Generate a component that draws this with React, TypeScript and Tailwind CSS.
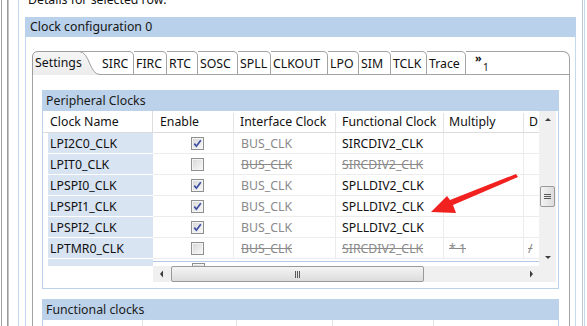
import React from "react";

type Row = {
  name: string;
  on: boolean;
  iface: string;
  func: string;
  mult?: string;
  d?: string;
};

const ROWS: Row[] = [
  { name: "LPI2C0_CLK", on: true, iface: "BUS_CLK", func: "SIRCDIV2_CLK" },
  { name: "LPIT0_CLK", on: false, iface: "BUS_CLK", func: "SIRCDIV2_CLK" },
  { name: "LPSPI0_CLK", on: true, iface: "BUS_CLK", func: "SPLLDIV2_CLK" },
  { name: "LPSPI1_CLK", on: true, iface: "BUS_CLK", func: "SPLLDIV2_CLK" },
  { name: "LPSPI2_CLK", on: true, iface: "BUS_CLK", func: "SPLLDIV2_CLK" },
  {
    name: "LPTMR0_CLK",
    on: false,
    iface: "BUS_CLK",
    func: "SIRCDIV2_CLK",
    mult: "* 1",
    d: "/",
  },
];

const TABS: { label: string; w: string }[] = [
  { label: "SIRC", w: "w-[34px]" },
  { label: "FIRC", w: "w-[33px]" },
  { label: "RTC", w: "w-[31px]" },
  { label: "SOSC", w: "w-[40px]" },
  { label: "SPLL", w: "w-[33px]" },
  { label: "CLKOUT", w: "w-[57px]" },
  { label: "LPO", w: "w-[31px]" },
  { label: "SIM", w: "w-[32px]" },
  { label: "TCLK", w: "w-[36px]" },
  { label: "Trace", w: "w-[39px]" },
];

function Check({ on }: { on: boolean }) {
  return (
    <span className="flex h-[13px] w-[13px] items-center justify-center border border-[#8e8f8f] bg-[linear-gradient(135deg,#d6d6d6,#fafafa)] shadow-[inset_0_0_0_1px_#f4f4f4]">
      {on && (
        <svg width="9" height="9" viewBox="0 0 9 9">
          <path
            d="M1.3 4.6 L3.4 7.2 L7.8 1.2"
            fill="none"
            stroke="#3e4fa3"
            strokeWidth="1.7"
          />
        </svg>
      )}
    </span>
  );
}

function Arrow({ dir }: { dir: "up" | "down" | "left" | "right" }) {
  const d = {
    up: "M1 5 L4 2 L7 5 Z",
    down: "M1 2 L4 5 L7 2 Z",
    left: "M5 0.5 L2 4 L5 7.5 Z",
    right: "M3 0.5 L6 4 L3 7.5 Z",
  }[dir];
  return (
    <svg width="8" height="8" viewBox="0 0 8 8">
      <path d={d} fill="#3c3c3c" />
    </svg>
  );
}

function Grip({ vertical }: { vertical?: boolean }) {
  return (
    <span className={vertical ? "flex flex-col gap-[1px]" : "flex gap-[1px]"}>
      {[0, 1, 2].map((i) => (
        <span
          key={i}
          className={
            vertical
              ? "h-[1px] w-[7px] bg-[#5a5a5a]"
              : "h-[7px] w-[1px] bg-[#5a5a5a]"
          }
        />
      ))}
    </span>
  );
}

function SettingsTab() {
  return (
    <div className="relative h-[24px] w-[68px] shrink-0">
      <svg
        className="absolute inset-0"
        width="68"
        height="24"
        viewBox="0 0 68 24"
      >
        <defs>
          <linearGradient id="tg" x1="0" y1="0" x2="0" y2="1">
            <stop offset="0" stopColor="#f6f6f6" />
            <stop offset="1" stopColor="#ececec" />
          </linearGradient>
        </defs>
        <path
          d="M0.5 24 L0.5 6 Q0.5 0.5 6 0.5 L47 0.5 C58 0.5 57 23.5 68 23.5 L68 24 Z"
          fill="url(#tg)"
        />
        <path d="M47 0.5 L68 0.5" stroke="#a3a3a3" fill="none" />
        <path
          d="M0.5 24 L0.5 6 Q0.5 0.5 6 0.5 L47 0.5 C58 0.5 57 23.5 68 23.5"
          stroke="#9c9c9c"
          fill="none"
        />
      </svg>
      <span className="relative flex h-full items-center pl-[3px] pt-[1px]">
        Settings
      </span>
    </div>
  );
}

export default function App() {
  return (
    <div className="relative flex h-[326px] w-[587px] overflow-hidden bg-white font-['Noto_Sans',sans-serif] text-[12.3px] leading-none text-[#111]">
      {/* left frame lines */}
      <div className="w-[1px] shrink-0" />
      <div className="w-[6px] shrink-0 border-l border-[#a3a3a3]" />
      <div className="w-[1px] shrink-0 bg-[#9a9a9a]" />
      <div className="w-[1px] shrink-0 bg-[#c4c4c4]" />
      <div className="w-[9px] shrink-0" />

      <div className="flex w-[558px] shrink-0 flex-col border-l border-[#c6d8ee] pl-[6px]">
        <div className="mt-[-8px] h-[15px] pl-[3px] leading-[15px]">
          Details for selected row:
        </div>

        {/* Clock configuration panel */}
        <div className="mt-[10px] flex w-[551px] flex-col">
          <div className="flex h-[20px] items-center bg-[#b9d1ea] pl-[5px] pt-[1px] text-[#141414]">
            Clock configuration 0
          </div>
          <div className="flex flex-col border-x border-[#c6d8ee] pl-[6px] pt-[14px]">
            {/* tab folder */}
            <div className="flex w-[538px] flex-col">
              <div className="flex h-[24px]">
                <SettingsTab />
                {TABS.map((t) => (
                  <div
                    key={t.label}
                    className={`${t.w} flex h-[24px] shrink-0 items-center rounded-tr-[5px] border-y border-r border-[#a3a3a3] pl-[2px] pt-[2px]`}
                  >
                    {t.label}
                  </div>
                ))}
                <div className="flex h-[24px] flex-1 rounded-tr-[7px] border-y border-r border-[#a3a3a3] pl-[9px]">
                  <span className="relative h-full w-[14px]">
                    <span className="absolute left-0 top-[0px] text-[11px] font-bold leading-none">
                      »
                    </span>
                    <span className="absolute left-[8px] top-[10px] text-[10px] leading-none">
                      1
                    </span>
                  </span>
                </div>
              </div>

              <div className="flex flex-col border-x border-[#a3a3a3] pl-[9px] pt-[15px]">
                {/* Peripheral Clocks group */}
                <div className="flex w-[517px] flex-col border border-[#bcd2ea]">
                  <div className="flex h-[20px] items-center bg-[#bcd2ea] pl-[3px] pt-[1px] text-[#1a1a1a]">
                    Peripheral Clocks
                  </div>
                  <div className="flex">
                    {/* frozen column */}
                    <div className="flex w-[110px] shrink-0 flex-col">
                      <div className="flex h-[22px] items-center border-b border-r border-[#dcdcdc] pl-[7px] pt-[2px]">
                        Clock Name
                      </div>
                      {ROWS.map((r) => (
                        <div
                          key={r.name}
                          className="ml-[5px] flex h-[21px] items-center border-b border-white bg-[#d8e4f2] pl-[2px] pt-[3px]"
                        >
                          {r.name}
                        </div>
                      ))}
                      <div className="ml-[5px] h-[7px] bg-[#d8e4f2]" />
                      <div className="h-[16px]" />
                    </div>

                    {/* scrolling part */}
                    <div className="flex w-[386px] shrink-0 flex-col">
                      <div className="flex h-[22px] border-b border-[#dcdcdc] pt-[2px]">
                        <div className="flex w-[81px] items-center border-r border-[#e4e4e4] pl-[7px]">
                          Enable
                        </div>
                        <div className="flex w-[102px] items-center border-r border-[#e4e4e4] pl-[6px]">
                          Interface Clock
                        </div>
                        <div className="flex w-[108px] items-center border-r border-[#e4e4e4] pl-[6px]">
                          Functional Clock
                        </div>
                        <div className="flex w-[80px] items-center border-r border-[#e4e4e4] pl-[5px]">
                          Multiply
                        </div>
                        <div className="flex w-[15px] items-center overflow-hidden pl-[5px]">
                          D
                        </div>
                      </div>
                      {ROWS.map((r) => {
                        const off = !r.on;
                        const gray = "text-[#8a8a8a]";
                        return (
                          <div
                            key={r.name}
                            className="flex h-[21px] border-b border-[#ececec]"
                          >
                            <div className="flex w-[81px] items-center justify-center border-r border-[#ececec] pl-[9px]">
                              <Check on={r.on} />
                            </div>
                            <div
                              className={`flex w-[102px] items-center border-r border-[#ececec] pl-[7px] pt-[3px] ${gray} ${off ? "line-through" : ""}`}
                            >
                              {r.iface}
                            </div>
                            <div
                              className={`flex w-[108px] items-center border-r border-[#ececec] pl-[6px] pt-[3px] ${off ? `${gray} line-through` : "text-[#111]"}`}
                            >
                              {r.func}
                            </div>
                            <div
                              className={`flex w-[80px] items-center border-r border-[#ececec] pl-[5px] pt-[3px] ${gray} line-through`}
                            >
                              {r.mult ?? ""}
                            </div>
                            <div
                              className={`flex w-[15px] items-center overflow-hidden pl-[4px] pt-[3px] ${gray} line-through`}
                            >
                              {r.d ?? ""}
                            </div>
                          </div>
                        );
                      })}
                      <div className="h-[7px] overflow-hidden pt-[2px]">
                        <div className="flex h-[5px] border-t border-[#b4cbe7] pt-[1px]">
                          <div className="flex w-[81px] justify-center pl-[9px]">
                            <Check on={false} />
                          </div>
                        </div>
                      </div>
                      {/* horizontal scrollbar */}
                      <div className="flex h-[16px] items-stretch bg-[#f0f0f0]">
                        <div className="flex w-[17px] items-center justify-center">
                          <Arrow dir="left" />
                        </div>
                        <div className="ml-[1px] flex w-[253px] items-center justify-center rounded-[2px] border border-[#9a9a9a] bg-[linear-gradient(#f4f4f4,#dcdcdc)]">
                          <Grip />
                        </div>
                        <div className="flex-1" />
                        <div className="flex w-[17px] items-center justify-center">
                          <Arrow dir="right" />
                        </div>
                      </div>
                    </div>

                    {/* vertical scrollbar */}
                    <div className="flex w-[17px] shrink-0 flex-col bg-[#f0f0f0]">
                      <div className="flex h-[17px] items-center justify-center">
                        <Arrow dir="up" />
                      </div>
                      <div className="h-[58px]" />
                      <div className="mx-[1px] flex h-[21px] items-center justify-center rounded-[2px] border border-[#9a9a9a] bg-[linear-gradient(90deg,#f4f4f4,#dcdcdc)]">
                        <Grip vertical />
                      </div>
                      <div className="flex-1" />
                      <div className="flex h-[17px] items-center justify-center">
                        <Arrow dir="down" />
                      </div>
                      <div className="h-[16px]" />
                    </div>
                  </div>
                  <div className="h-[6px]" />
                </div>

                {/* Functional clocks group */}
                <div className="mt-[10px] flex w-[517px] flex-col border-x border-t border-[#bcd2ea]">
                  <div className="flex h-[20px] items-center bg-[#bcd2ea] pl-[3px] pt-[1px] text-[#1a1a1a]">
                    Functional clocks
                  </div>
                  <div className="flex h-[20px]">
                    <div className="w-[100px] border-r border-[#e4e4e4]" />
                    <div className="w-[94px] border-r border-[#e4e4e4]" />
                    <div className="w-[96px] border-r border-[#e4e4e4]" />
                    <div className="w-[101px] border-r border-[#e4e4e4]" />
                    <div className="flex-1" />
                  </div>
                </div>
              </div>
            </div>
          </div>
        </div>
      </div>

      {/* right frame lines */}
      <div className="w-[6px] shrink-0" />
      <div className="w-[1px] shrink-0 bg-[#b9c6d6]" />
      <div className="w-[1px] shrink-0" />
      <div className="w-[1px] shrink-0 bg-[#c6d8ee]" />

      {/* annotation arrow */}
      <svg
        className="pointer-events-none absolute left-0 top-0"
        width="587"
        height="326"
        viewBox="0 0 587 326"
      >
        <polygon
          points="431,212 447,196 450,200 516,174 518,177 453,205 456,213"
          fill="#f0211f"
        />
      </svg>
    </div>
  );
}
